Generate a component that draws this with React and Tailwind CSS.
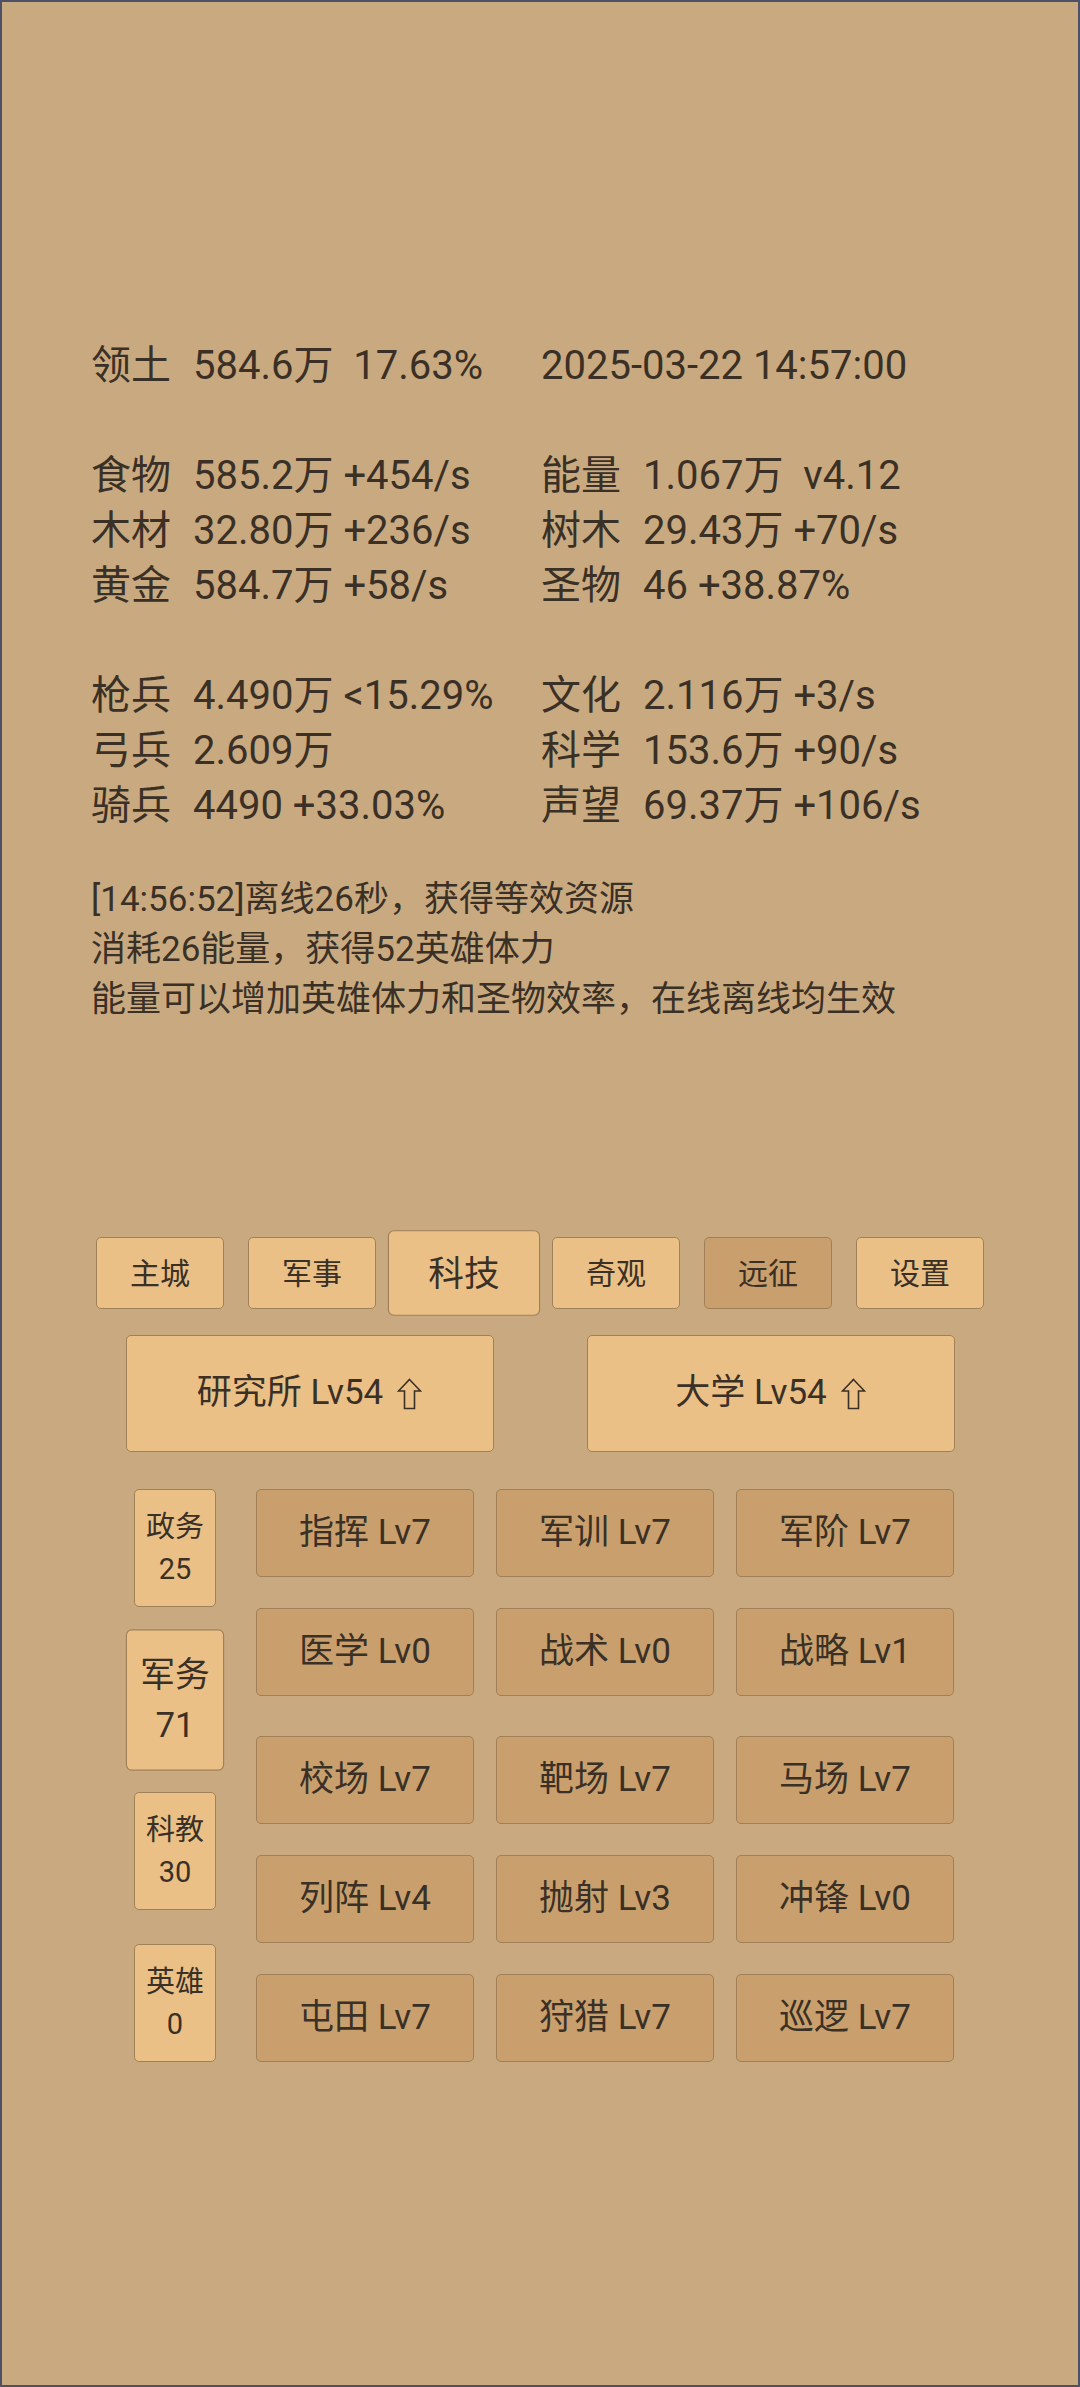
import React from "react";

const stats = [
  [["领土", "584.6万  17.63%"], ["", "2025-03-22 14:57:00"]],
  null,
  [["食物", "585.2万 +454/s"], ["能量", "1.067万  v4.12"]],
  [["木材", "32.80万 +236/s"], ["树木", "29.43万 +70/s"]],
  [["黄金", "584.7万 +58/s"], ["圣物", "46 +38.87%"]],
  null,
  [["枪兵", "4.490万 <15.29%"], ["文化", "2.116万 +3/s"]],
  [["弓兵", "2.609万"], ["科学", "153.6万 +90/s"]],
  [["骑兵", "4490 +33.03%"], ["声望", "69.37万 +106/s"]],
];

const messages = [
  "[14:56:52]离线26秒，获得等效资源",
  "消耗26能量，获得52英雄体力",
  "能量可以增加英雄体力和圣物效率，在线离线均生效",
];

const tabs = [
  { name: "主城" },
  { name: "军事" },
  { name: "科技", active: true },
  { name: "奇观" },
  { name: "远征", dark: true },
  { name: "设置" },
];

const groups = [
  { name: "政务", n: 25 },
  { name: "军务", n: 71, active: true },
  { name: "科教", n: 30 },
  { name: "英雄", n: 0 },
];

const techRows = [
  ["指挥 Lv7", "军训 Lv7", "军阶 Lv7"],
  ["医学 Lv0", "战术 Lv0", "战略 Lv1"],
  ["校场 Lv7", "靶场 Lv7", "马场 Lv7"],
  ["列阵 Lv4", "抛射 Lv3", "冲锋 Lv0"],
  ["屯田 Lv7", "狩猎 Lv7", "巡逻 Lv7"],
];

function UpArrow() {
  return (
    <svg width="25" height="32" viewBox="0 0 25 32" className="ml-[14px] inline-block">
      <polygon
        points="12.5,1.5 23.5,13 17.5,13 17.5,30.5 7.5,30.5 7.5,13 1.5,13"
        fill="none"
        stroke="#3a3026"
        strokeWidth="1.6"
        strokeLinejoin="miter"
      />
    </svg>
  );
}

export default function App() {
  return (
    <div className="h-[2387px] w-[1080px] overflow-hidden border-2 border-[#4d5168] bg-[#c9aa80] font-['Roboto','Noto_Sans_CJK_SC',sans-serif] text-[#3a3026]">
      {/* 资源 */}
      <div className="pl-[89px] pt-[336px] text-[40px] leading-[55px]">
        {stats.map((row, i) =>
          row ? (
            <div key={i} className="flex">
              <div className="flex w-[450px]">
                <span className="w-[102px]">{row[0][0]}</span>
                <span className="whitespace-pre">{row[0][1]}</span>
              </div>
              <div className="flex">
                {row[1][0] && <span className="w-[102px]">{row[1][0]}</span>}
                <span className="whitespace-pre">{row[1][1]}</span>
              </div>
            </div>
          ) : (
            <div key={i} className="h-[55px]" />
          )
        )}
      </div>

      {/* 日志 */}
      <div className="mt-[42px] pl-[89px] text-[35px] leading-[50px]">
        {messages.map((m) => (
          <div key={m}>{m}</div>
        ))}
      </div>

      {/* 标签 */}
      <div className="mt-[212px] flex justify-center gap-[24px]">
        {tabs.map((t) => (
          <div
            key={t.name}
            className={`flex h-[72px] w-[128px] items-center justify-center rounded-[5px] border border-[#a08058] text-[30px] ${
              t.dark ? "bg-[#c9a06d]" : "bg-[#ebc087]"
            } ${t.active ? "scale-[1.19]" : ""}`}
          >
            {t.name}
          </div>
        ))}
      </div>

      {/* 建筑 */}
      <div className="mt-[26px] flex justify-center gap-[93px]">
        {["研究所 Lv54", "大学 Lv54"].map((b) => (
          <div
            key={b}
            className="flex h-[117px] w-[368px] items-center justify-center rounded-[5px] border border-[#a08058] bg-[#ebc087] text-[35px]"
          >
            <span>{b}</span>
            <UpArrow />
          </div>
        ))}
      </div>

      {/* 科技 */}
      <div className="mt-[37px] flex gap-[40px] pl-[132px]">
        <div className="flex w-[82px] flex-col justify-between">
          {groups.map((g) => (
            <div
              key={g.name}
              className={`flex h-[118px] w-[82px] flex-col items-center justify-center rounded-[5px] border border-[#a08058] bg-[#ebc087] text-[29px] leading-[42px] ${
                g.active ? "scale-[1.2]" : ""
              }`}
            >
              <span>{g.name}</span>
              <span>{g.n}</span>
            </div>
          ))}
        </div>
        <div className="flex flex-col gap-[31px]">
          {techRows.map((row, i) => (
            <div key={i} className={`flex gap-[22px] ${i === 2 ? "mt-[9px]" : ""}`}>
              {row.map((t) => (
                <div
                  key={t}
                  className="flex h-[88px] w-[218px] items-center justify-center rounded-[5px] border border-[#a08058] bg-[#c9a06d] text-[35px]"
                >
                  {t}
                </div>
              ))}
            </div>
          ))}
        </div>
      </div>
    </div>
  );
}
